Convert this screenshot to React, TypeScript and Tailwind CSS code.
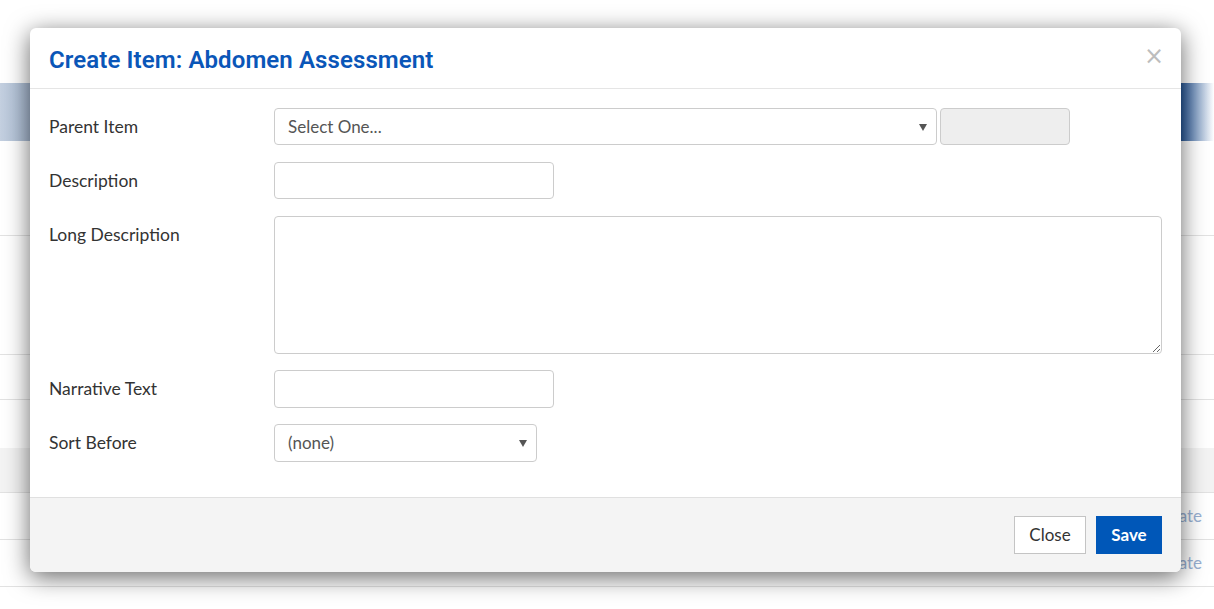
import React from 'react';

const Field = ({ label, className = '', children }: { label: string; className?: string; children: React.ReactNode }) => (
  <div className={`flex items-start ${className}`}>
    <div className="w-[225px] shrink-0 h-[37px] flex items-center pt-[2px] text-[17.5px] text-[#333333]">{label}</div>
    {children}
  </div>
);

const Caret = () => (
  <svg width="8" height="7" viewBox="0 0 8 7" className="absolute right-[9px] top-[15px]">
    <path d="M0 0 H8 L4 7 Z" fill="#555555" />
  </svg>
);

// page content sitting behind the dialog
const Backdrop = () => (
  <div className="absolute inset-0 bg-white font-['Lato',sans-serif]">
    <div className="h-[83px]" />
    <div className="h-[58px] bg-[linear-gradient(to_right,#c4d0e0_0%,#a9bbd3_2.5%,#2c5c9c_97.3%,#ffffff_100%)]" />
    <div className="h-[95px] border-b border-[#e2e2e2]" />
    <div className="h-[119px] border-b border-[#e2e2e2]" />
    <div className="h-[45px] border-b border-[#e2e2e2]" />
    <div className="h-[48px]" />
    <div className="h-[45px] bg-[#f3f3f3] border-b border-[#e2e2e2]" />
    <div className="h-[47px] border-b border-[#e2e2e2] flex items-center justify-end pr-[12px] text-[17px] text-[#98b0d2]">ate</div>
    <div className="h-[47px] border-b border-[#e2e2e2] flex items-center justify-end pr-[12px] text-[17px] text-[#98b0d2]">ate</div>
  </div>
);

export default function App() {
  return (
    <div className="relative w-full h-[609px] overflow-hidden bg-white">
      <Backdrop />
      <div className="absolute left-[30px] top-[28px] w-[1151px] h-[544px] bg-white rounded-[6px] shadow-[0_5px_24px_rgba(0,0,0,0.6)] flex flex-col overflow-hidden font-['Lato',sans-serif]">
        <div className="h-[61px] shrink-0 border-b border-[#e5e5e5] flex items-center justify-between pl-[19px] pr-[17px]">
          <h4 className="font-['Roboto',sans-serif] font-semibold text-[24px] text-[#0a56b8] tracking-[0.1px] pt-[3px]">
            Create Item: Abdomen Assessment
          </h4>
          <span className="text-[#bdbdbd] text-[24px] leading-none font-['DejaVu_Sans',sans-serif] -mt-[5px]">×</span>
        </div>

        <div className="flex-1 flex flex-col pt-[19px] pl-[19px] pr-[19px]">
          <Field label="Parent Item">
            <div className="flex gap-[3px]">
              <div className="relative w-[663px] h-[37px] border border-[#cccccc] rounded-[4px] flex items-center pl-[13px] text-[17px] text-[#555555]">
                Select One...
                <Caret />
              </div>
              <div className="w-[130px] h-[37px] border border-[#cccccc] rounded-[4px] bg-[#eeeeee]" />
            </div>
          </Field>
          <Field label="Description" className="mt-[17px]">
            <input className="w-[280px] h-[37px] border border-[#cccccc] rounded-[4px] outline-none" />
          </Field>
          <Field label="Long Description" className="mt-[17px]">
            <textarea className="w-[888px] h-[138px] border border-[#cccccc] rounded-[4px] outline-none" />
          </Field>
          <Field label="Narrative Text" className="mt-[16px]">
            <input className="w-[280px] h-[38px] border border-[#cccccc] rounded-[4px] outline-none" />
          </Field>
          <Field label="Sort Before" className="mt-[16px]">
            <div className="relative w-[263px] h-[38px] border border-[#cccccc] rounded-[4px] flex items-center pl-[13px] text-[17px] text-[#555555]">
              (none)
              <Caret />
            </div>
          </Field>
        </div>

        <div className="h-[75px] shrink-0 border-t border-[#e0e0e0] bg-[#f4f4f4] flex items-center justify-end gap-[10px] pr-[19px]">
          <button className="w-[72px] h-[38px] bg-white border border-[#c4c4c4] text-[17px] text-[#333333]">Close</button>
          <button className="w-[66px] h-[38px] bg-[#0057b8] text-[17px] font-bold text-white">Save</button>
        </div>
      </div>
    </div>
  );
}
